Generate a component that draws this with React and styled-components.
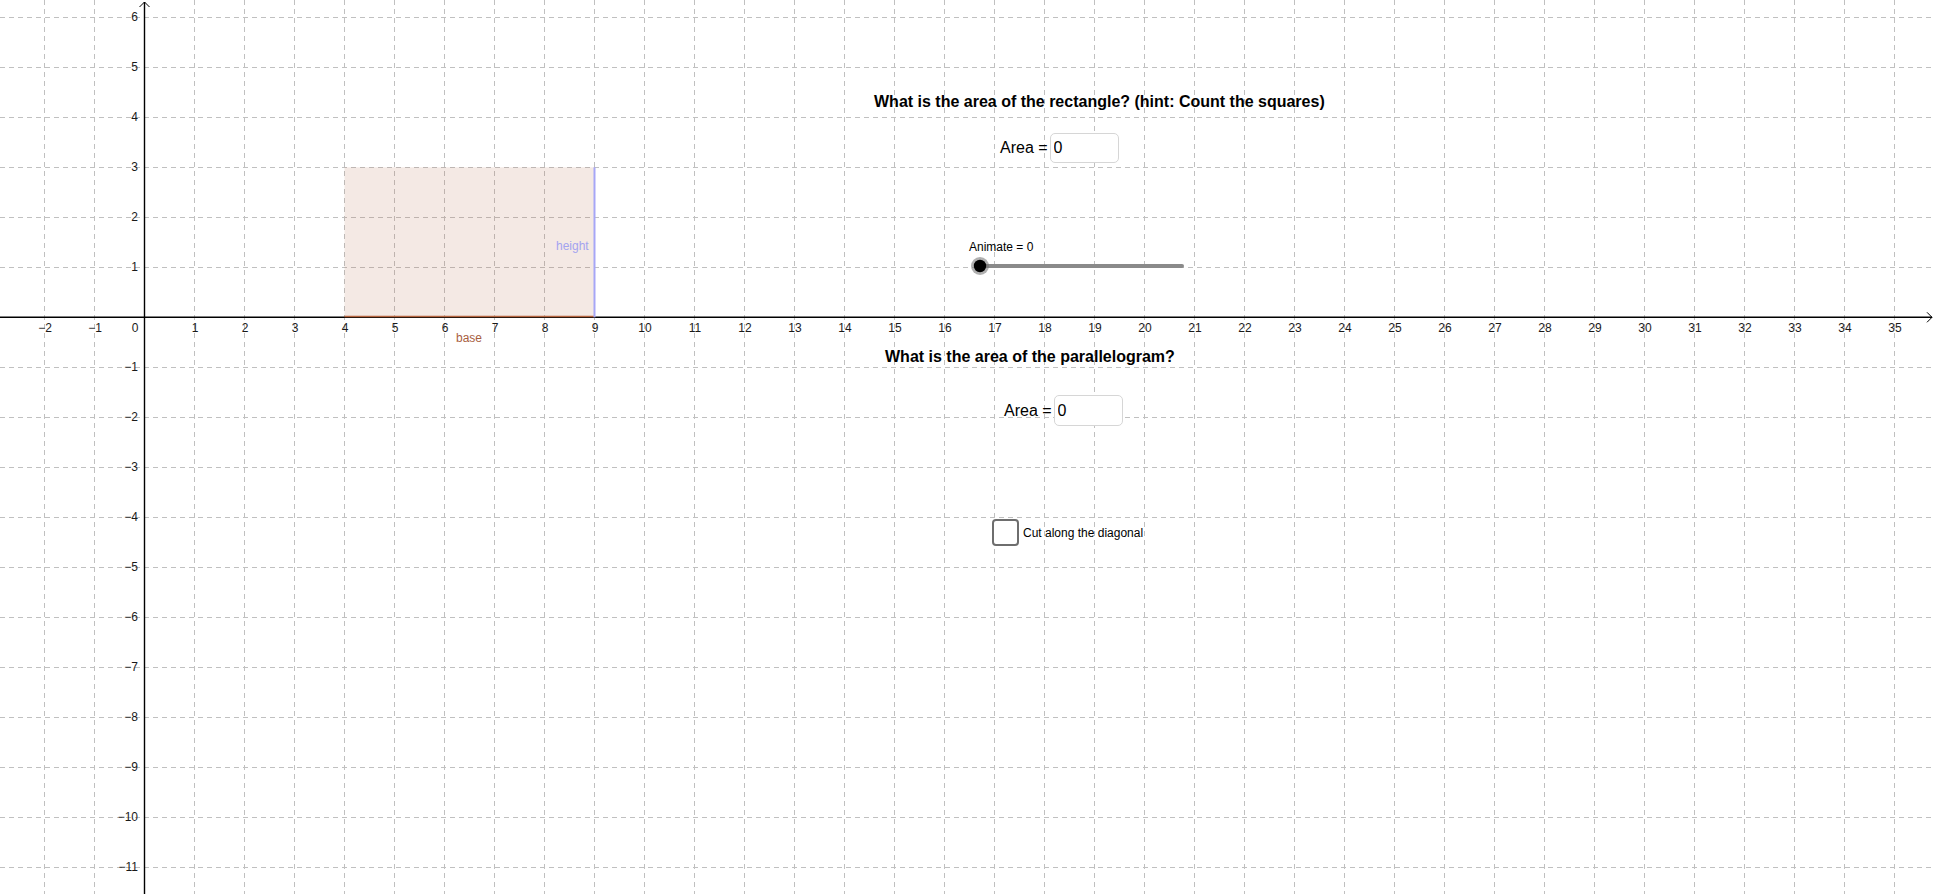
import React from "react";
import styled, { createGlobalStyle } from "styled-components";

const W = 1936;
const H = 894;
const OX = 144.5;
const OY = 317.3;
const U = 50;

const GlobalStyle = createGlobalStyle`
  html, body { margin: 0; padding: 0; background: #fff; overflow: hidden; }
  body { font-family: "Liberation Sans", Arial, sans-serif; }
`;

const Canvas = styled.div`
  position: relative;
  width: ${W}px;
  height: ${H}px;
  background: #ffffff;
  overflow: hidden;
  font-family: "Liberation Sans", Arial, sans-serif;
`;

const Graph = styled.svg`
  display: block;
  width: ${W}px;
  height: ${H}px;
`;

const Overlay = styled.div`
  position: absolute;
  left: ${(p) => p.$x}px;
  top: ${(p) => p.$y}px;
`;

const Heading = styled.div`
  font-size: 16px;
  line-height: 20px;
  font-weight: bold;
  color: #000;
  white-space: nowrap;
`;

const FieldRow = styled.div`
  display: flex;
  align-items: center;
  gap: 2px;
  height: ${(p) => p.$h}px;
`;

const FieldLabel = styled.span`
  font-size: 16px;
  color: #000;
  white-space: nowrap;
`;

const InputBox = styled.input`
  box-sizing: border-box;
  width: 69px;
  height: ${(p) => p.$h}px;
  border: 1px solid #d6d6d6;
  border-radius: 5px;
  padding: 0 0 0 3px;
  margin: 0;
  font-family: "Liberation Sans", Arial, sans-serif;
  font-size: 16px;
  color: #000;
  background: #fff;
  outline: none;
`;

const SliderBox = styled.div`
  display: flex;
  flex-direction: column;
`;

const SliderCaption = styled.div`
  font-size: 12px;
  line-height: 14px;
  color: #000;
  white-space: nowrap;
`;

const SliderTrack = styled.svg`
  display: block;
  margin-top: 0;
  margin-left: -20px;
`;

const CheckRow = styled.label`
  display: flex;
  align-items: center;
  gap: 4px;
  cursor: pointer;
`;

const CheckSquare = styled.span`
  box-sizing: border-box;
  width: 27px;
  height: 27px;
  border: 2px solid #6e6e6e;
  border-radius: 4px;
  background: #fff;
`;

const CheckText = styled.span`
  font-size: 12px;
  color: #000;
  white-space: nowrap;
`;

const range = (a, b) => {
  const r = [];
  for (let i = a; i <= b; i++) r.push(i);
  return r;
};

const fmt = (n) => (n < 0 ? "\u2212" + Math.abs(n) : String(n));

function GridAndAxes() {
  const xs = range(-2, 35);
  const ys = range(-11, 6);
  const right = 1932;
  return (
    <Graph viewBox={`0 0 ${W} ${H}`}>
      <g stroke="#c0c0c0" strokeWidth="1" strokeDasharray="5 4" shapeRendering="crispEdges">
        {xs.map((i) => i !== 0 && (
          <line key={"vx" + i} x1={OX + i * U} y1={0} x2={OX + i * U} y2={H} />
        ))}
        {ys.map((j) => j !== 0 && (
          <line key={"hy" + j} x1={0} y1={OY - j * U} x2={right} y2={OY - j * U} />
        ))}
      </g>

      <rect x={OX + 4 * U} y={OY - 3 * U} width={5 * U} height={3 * U} fill="#b06040" fillOpacity="0.14" />

      <g stroke="#000" strokeWidth="1.4" fill="none">
        <line x1={0} y1={OY} x2={right} y2={OY} />
        <polyline points={`${right - 5},${OY - 5} ${right},${OY} ${right - 5},${OY + 5}`} strokeWidth="1" />
        <line x1={OX} y1={H} x2={OX} y2={2} />
        <polyline points={`${OX - 5},${7} ${OX},${2} ${OX + 5},${7}`} strokeWidth="1" />
      </g>

      <line x1={OX + 4 * U} y1={OY - 0.8} x2={OX + 9 * U} y2={OY - 0.8} stroke="#b5643f" strokeWidth="1.6" />
      <line x1={OX + 9 * U} y1={OY} x2={OX + 9 * U} y2={OY - 3 * U} stroke="#a6a6f6" strokeWidth="2" />

      <g fontFamily="Liberation Sans, Arial, sans-serif" fontSize="12" fill="#1a1a1a">
        {xs.map((i) => i !== 0 && (
          <text key={"lx" + i} x={OX + i * U + 0.5} y={OY + 15} textAnchor="middle">{fmt(i)}</text>
        ))}
        <text x={OX - 6} y={OY + 15} textAnchor="end">0</text>
        {ys.map((j) => j !== 0 && (
          <text key={"ly" + j} x={OX - 6.5} y={OY - j * U + 4} textAnchor="end">{fmt(j)}</text>
        ))}
      </g>

      <text x={556} y={250} fontFamily="Liberation Sans, Arial, sans-serif" fontSize="12" fill="#a3a3f0">height</text>
      <text x={456} y={342} fontFamily="Liberation Sans, Arial, sans-serif" fontSize="12" fill="#a8603f">base</text>
    </Graph>
  );
}

function AreaField({ x, y, h }) {
  return (
    <Overlay $x={x} $y={y}>
      <FieldRow $h={h}>
        <FieldLabel>Area =</FieldLabel>
        <InputBox $h={h} defaultValue="0" />
      </FieldRow>
    </Overlay>
  );
}

function AnimateSlider() {
  return (
    <Overlay $x={969} $y={240}>
      <SliderBox>
        <SliderCaption>Animate = 0</SliderCaption>
        <SliderTrack width="240" height="24" viewBox="0 0 240 24">
          <line x1="31" y1="12" x2="233" y2="12" stroke="#8a8a8a" strokeWidth="4" strokeLinecap="round" />
          <circle cx="31" cy="12" r="9" fill="#6f6f6f" fillOpacity="0.55" />
          <circle cx="31" cy="12" r="6.2" fill="#000" />
        </SliderTrack>
      </SliderBox>
    </Overlay>
  );
}

export default function App() {
  return (
    <>
      <GlobalStyle />
      <Canvas>
        <GridAndAxes />
        <Overlay $x={874} $y={92}>
          <Heading>What is the area of the rectangle? (hint: Count the squares)</Heading>
        </Overlay>
        <AreaField x={1000} y={133} h={30} />
        <AnimateSlider />
        <Overlay $x={885} $y={347}>
          <Heading>What is the area of the parallelogram?</Heading>
        </Overlay>
        <AreaField x={1004} y={395} h={31} />
        <Overlay $x={992} $y={519}>
          <CheckRow>
            <CheckSquare />
            <CheckText>Cut along the diagonal</CheckText>
          </CheckRow>
        </Overlay>
      </Canvas>
    </>
  );
}
